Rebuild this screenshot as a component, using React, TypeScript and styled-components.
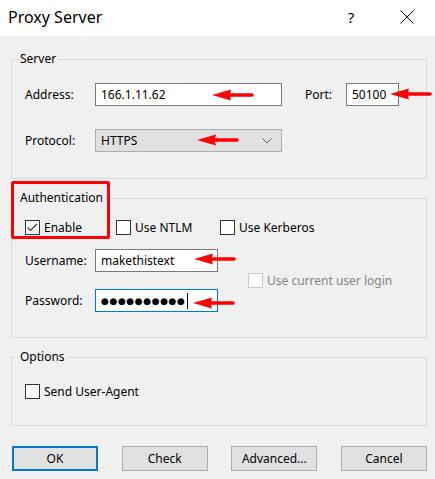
import React from "react";
import styled, { createGlobalStyle } from "styled-components";

const Global = createGlobalStyle`
  html, body {
    margin: 0;
    padding: 0;
    background: #f0f0f0;
  }
  body {
    font-family: "Noto Sans", "Open Sans", sans-serif;
    font-size: 12px;
    color: #000;
    width: 435px;
    height: 479px;
    overflow: hidden;
  }
  * { box-sizing: border-box; }
`;

const Window = styled.div`
  width: 435px;
  height: 479px;
  display: flex;
  flex-direction: column;
  background: #f0f0f0;
`;

const TitleBar = styled.div`
  height: 36px;
  background: #fff;
  display: flex;
  align-items: center;
  padding-left: 8px;
  flex-shrink: 0;
`;

const Title = styled.div`
  font-size: 16px;
  line-height: 20px;
  flex: 1;
  padding-bottom: 2px;
`;

const HelpGlyph = styled.div`
  width: 20px;
  font-size: 15px;
  line-height: 20px;
  text-align: center;
  margin-right: 39px;
  padding-bottom: 2px;
`;

const CloseIcon = styled.svg`
  width: 14px;
  height: 14px;
  margin-right: 21px;
  margin-bottom: 2px;
`;

const Content = styled.div`
  padding: 0 8px 0 11px;
  display: flex;
  flex-direction: column;
`;

const Section = styled.div<{ $gap: number }>`
  position: relative;
  margin-top: ${(p) => p.$gap}px;
`;

const Group = styled.fieldset<{ $top: number; $bottom: number }>`
  margin: 0;
  border: 1px solid #dcdcdc;
  padding: ${(p) => p.$top}px 8px ${(p) => p.$bottom}px 13px;
  min-width: 0;
`;

const Legend = styled.legend`
  font-size: 12px;
  line-height: 14px;
  padding: 0 2px 0 1px;
  margin-left: -6px;
`;

const Row = styled.div`
  display: flex;
  align-items: center;
  height: 23px;
`;

const FieldLabel = styled.label<{ $w: number; $ml?: number }>`
  width: ${(p) => p.$w}px;
  margin-left: ${(p) => p.$ml ?? 0}px;
  flex-shrink: 0;
  line-height: 16px;
`;

const FieldWrap = styled.div<{ $w: number }>`
  position: relative;
  width: ${(p) => p.$w}px;
  height: 23px;
  flex-shrink: 0;
`;

const TextBox = styled.div<{ $focused?: boolean }>`
  width: 100%;
  height: 100%;
  background: #fff;
  border: 1px solid ${(p) => (p.$focused ? "#0078d7" : "#7a7a7a")};
  padding: 0 5px;
  display: flex;
  align-items: center;
  white-space: nowrap;
`;

const Dots = styled.span`
  font-family: "DejaVu Sans", sans-serif;
  font-size: 9px;
  letter-spacing: 0.6px;
  line-height: 12px;
`;

const Caret = styled.span`
  display: inline-block;
  width: 1px;
  height: 16px;
  background: #000;
  margin-left: 1px;
`;

const ComboBox = styled.div`
  width: 100%;
  height: 100%;
  background: #e1e1e1;
  border: 1px solid #adadad;
  padding: 0 9px 0 5px;
  display: flex;
  align-items: center;
  justify-content: space-between;
`;

const Chevron = styled.svg`
  width: 10px;
  height: 6px;
`;

const Arrow = styled.svg<{ $x: number; $y: number }>`
  position: absolute;
  left: ${(p) => p.$x}px;
  top: ${(p) => p.$y}px;
  width: 42px;
  height: 12px;
  overflow: visible;
`;

const RedArrow = ({ x, y }: { x: number; y: number }) => (
  <Arrow $x={x} $y={y} viewBox="0 0 42 12">
    <path d="M0 6 L19 0.5 Q17 6 19 11.5 Z" fill="#ff0000" />
    <line x1="16" y1="6" x2="40" y2="6" stroke="#ff0000" strokeWidth="3.6" strokeLinecap="round" />
  </Arrow>
);

const Highlight = styled.div`
  position: absolute;
  left: 0;
  top: -10px;
  width: 99px;
  height: 58px;
  border: 3px solid #ff0000;
  border-radius: 2px;
  pointer-events: none;
`;

const CheckRow = styled.div`
  display: flex;
  align-items: center;
  height: 15px;
`;

const CheckItem = styled.label<{ $w?: number; $disabled?: boolean }>`
  display: flex;
  align-items: center;
  gap: 4px;
  width: ${(p) => (p.$w ? `${p.$w}px` : "auto")};
  flex-shrink: 0;
  color: ${(p) => (p.$disabled ? "#838383" : "#000")};
  line-height: 15px;
`;

const Box = styled.span<{ $disabled?: boolean }>`
  width: 15px;
  height: 15px;
  flex-shrink: 0;
  background: #fff;
  border: 1px solid ${(p) => (p.$disabled ? "#cccccc" : "#333333")};
  display: flex;
  align-items: center;
  justify-content: center;
`;

const Tick = styled.svg`
  width: 13px;
  height: 13px;
`;

const Check = ({ label, checked, disabled, w }: { label: string; checked?: boolean; disabled?: boolean; w?: number }) => (
  <CheckItem $w={w} $disabled={disabled}>
    <Box $disabled={disabled}>
      {checked && (
        <Tick viewBox="0 0 13 13">
          <polyline points="1.5,6.5 4.5,9.5 11,3" fill="none" stroke="#333" strokeWidth="1.1" />
        </Tick>
      )}
    </Box>
    {label}
  </CheckItem>
);

const CredGrid = styled.div`
  display: grid;
  grid-template-columns: 70px 123px auto;
  grid-template-rows: 23px 23px;
  row-gap: 17px;
  column-gap: 0;
  align-items: center;
  margin-top: 14px;
`;

const LoginCell = styled.div`
  grid-column: 3;
  grid-row: 1 / span 2;
  align-self: center;
  margin-left: 30px;
`;

const ButtonBar = styled.div`
  display: flex;
  justify-content: space-between;
  margin-top: 20px;
  padding-left: 1px;
`;

const Button = styled.button<{ $primary?: boolean }>`
  width: 86px;
  height: 25px;
  background: #e1e1e1;
  border: ${(p) => (p.$primary ? "2px solid #0078d7" : "1px solid #adadad")};
  font-family: inherit;
  font-size: 12px;
  color: #000;
  padding: 0;
`;

export default function App() {
  return (
    <Window>
      <Global />
      <TitleBar>
        <Title>Proxy Server</Title>
        <HelpGlyph>?</HelpGlyph>
        <CloseIcon viewBox="0 0 14 14">
          <path d="M0.5 0.5 L13.5 13.5 M13.5 0.5 L0.5 13.5" stroke="#000" strokeWidth="1" />
        </CloseIcon>
      </TitleBar>
      <Content>
        <Section $gap={16}>
          <Group $top={17} $bottom={26}>
            <Legend>Server</Legend>
            <Row>
              <FieldLabel $w={70}>Address:</FieldLabel>
              <FieldWrap $w={187}>
                <TextBox>166.1.11.62</TextBox>
                <RedArrow x={117} y={6} />
              </FieldWrap>
              <FieldLabel $w={41} $ml={23}>Port:</FieldLabel>
              <FieldWrap $w={53}>
                <TextBox>50100</TextBox>
                <RedArrow x={44} y={5} />
              </FieldWrap>
            </Row>
            <Row style={{ marginTop: 23 }}>
              <FieldLabel $w={70}>Protocol:</FieldLabel>
              <FieldWrap $w={187}>
                <ComboBox>
                  HTTPS
                  <Chevron viewBox="0 0 10 6">
                    <polyline points="0.5,0.5 5,5 9.5,0.5" fill="none" stroke="#606060" strokeWidth="1" />
                  </Chevron>
                </ComboBox>
                <RedArrow x={102} y={5} />
              </FieldWrap>
            </Row>
          </Group>
        </Section>

        <Section $gap={12}>
          <Group $top={15} $bottom={25}>
            <Legend>Authentication</Legend>
            <CheckRow>
              <Check label="Enable" checked w={91} />
              <Check label="Use NTLM" w={104} />
              <Check label="Use Kerberos" />
            </CheckRow>
            <CredGrid>
              <FieldLabel $w={70}>Username:</FieldLabel>
              <FieldWrap $w={123}>
                <TextBox>makethistext</TextBox>
                <RedArrow x={99} y={4} />
              </FieldWrap>
              <LoginCell>
                <Check label="Use current user login" disabled />
              </LoginCell>
              <FieldLabel $w={70}>Password:</FieldLabel>
              <FieldWrap $w={123}>
                <TextBox $focused>
                  <Dots>●●●●●●●●●●</Dots>
                  <Caret />
                </TextBox>
                <RedArrow x={98} y={8} />
              </FieldWrap>
            </CredGrid>
          </Group>
          <Highlight />
        </Section>

        <Section $gap={12}>
          <Group $top={20} $bottom={26}>
            <Legend>Options</Legend>
            <CheckRow>
              <Check label="Send User-Agent" />
            </CheckRow>
          </Group>
        </Section>

        <ButtonBar>
          <Button $primary>OK</Button>
          <Button>Check</Button>
          <Button>Advanced...</Button>
          <Button>Cancel</Button>
        </ButtonBar>
      </Content>
    </Window>
  );
}
